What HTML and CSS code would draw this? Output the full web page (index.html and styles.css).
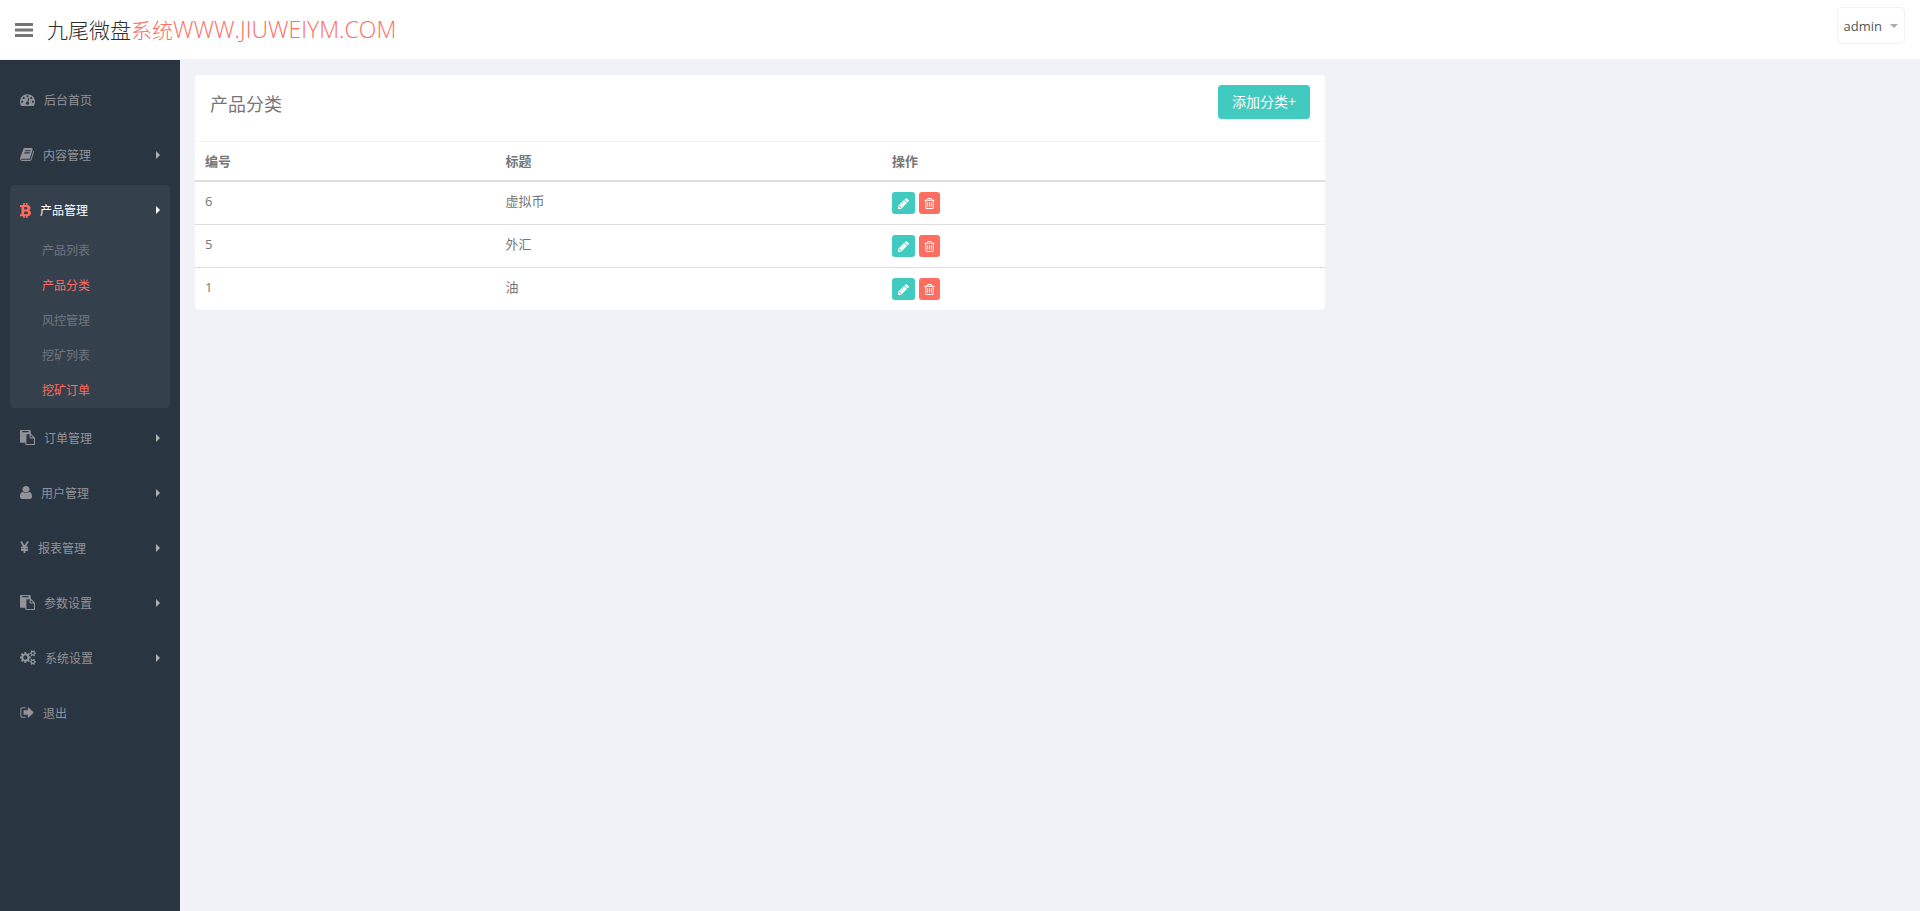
FILE: index.html
```html
<!DOCTYPE html>
<html lang="zh-CN">
<head>
<meta charset="utf-8">
<title>产品分类</title>
<link rel="stylesheet" href="styles.css">
</head>
<body>
<svg class="sprite" aria-hidden="true">
  <symbol id="i-dash" viewBox="0 0 1792 1792"><path d="M384 1152q0-53-37.5-90.5t-90.5-37.5-90.5 37.5-37.5 90.5 37.5 90.5 90.5 37.5 90.5-37.5 37.5-90.5zm192-448q0-53-37.5-90.5t-90.5-37.5-90.5 37.5-37.5 90.5 37.5 90.5 90.5 37.5 90.5-37.5 37.5-90.5zm428 481l101-382q6-26-7.5-48.5t-38.5-29.5-48 6.5-30 39.5l-101 382q-60 5-107 43.5t-63 98.5q-20 77 20 146t117 89 146-20 89-117q16-60-6-117t-72-91zm660-33q0-53-37.5-90.5t-90.5-37.5-90.5 37.5-37.5 90.5 37.5 90.5 90.5 37.5 90.5-37.5 37.5-90.5zm-640-640q0-53-37.5-90.5t-90.5-37.5-90.5 37.5-37.5 90.5 37.5 90.5 90.5 37.5 90.5-37.5 37.5-90.5zm448 192q0-53-37.5-90.5t-90.5-37.5-90.5 37.5-37.5 90.5 37.5 90.5 90.5 37.5 90.5-37.5 37.5-90.5zm320 448q0 261-141 483-19 29-54 29h-1402q-35 0-54-29-141-221-141-483 0-182 71-348t191-286 286-191 348-71 348 71 286 191 191 286 71 348z"/></symbol>
  <symbol id="i-book" viewBox="64 0 1664 1792"><path d="M1703 478q40 57 18 129l-275 906q-19 64-76.5 107.5t-122.5 43.5h-923q-77 0-148.5-53.5t-99.5-131.5q-24-67-2-127 0-4 3-27t4-37q1-8-3-21.5t-3-19.5q2-11 8-21t16.5-23.5 16.5-23.5q23-38 45-91.5t30-91.5q3-10 .5-30t-.5-28q3-11 17-28t17-23q21-36 42-92t25-90q1-9-2.5-32t.5-28q4-13 22-30.5t22-22.5q19-26 42.5-84.5t27.5-96.5q1-8-3-25.5t-2-26.5q2-8 9-18t18-23 17-21q8-12 16.5-30.5t15-35 16-36 19.5-32 26.5-23.5 36-11.5 47.5 5.5l-1 3q38-9 51-9h761q74 0 114 56t18 130l-274 906q-36 119-71.5 153.5t-128.5 34.5h-869q-27 0-38 15-11 16-1 43 24 70 144 70h923q29 0 56-15.5t35-41.5l300-987q7-22 5-57 38 15 59 43zm-1064 2q-4 13 2 22.5t20 9.5h608q13 0 25.5-9.5t16.5-22.5l21-64q4-13-2-22.5t-20-9.5h-608q-13 0-25.5 9.5t-16.5 22.5zm-83 256q-4 13 2 22.5t20 9.5h608q13 0 25.5-9.5t16.5-22.5l21-64q4-13-2-22.5t-20-9.5h-608q-13 0-25.5 9.5t-16.5 22.5z"/></symbol>
  <symbol id="i-btc" viewBox="0 0 11 15"><path fill-rule="evenodd" d="M0 2h6.500q4 0 4 2.900 0 1.700-1.500 2.300 2 .5 2 2.800 0 3.200-4.500 3.200H0v-1.900h1.500V3.900H0zM4.200 3.900v2.600h1.500q1.800 0 1.800-1.300T5.700 3.900zM4.200 8.400v2.900H6q2 0 2-1.500T6 8.400z"/><path d="M3.200 0h1.600v2.100H3.200zM6 0h1.600v2.300H6zM3.200 13h1.600v2H3.200zM6 13h1.600v2H6z"/></symbol>
  <symbol id="i-paste" viewBox="0 0 1792 1792"><path d="M768 1664h896v-640h-416q-40 0-68-28t-28-68v-416h-384v1152zm256-1440v-64q0-13-9.500-22.500t-22.500-9.500h-704q-13 0-22.500 9.500t-9.500 22.500v64q0 13 9.500 22.500t22.500 9.500h704q13 0 22.500-9.500t9.500-22.500zm256 672h299l-299-299v299zm512 128v672q0 40-28 68t-68 28h-960q-40 0-68-28t-28-68v-160h-544q-40 0-68-28t-28-68v-1344q0-40 28-68t68-28h1088q40 0 68 28t28 68v328q21 13 36 28l408 408q28 28 48 76t20 88z"/></symbol>
  <symbol id="i-user" viewBox="256 128 1280 1536" preserveAspectRatio="none"><path d="M1536 1399q0 109-62.500 187t-150.500 78h-854q-88 0-150.500-78t-62.500-187q0-85 8.500-160.500t31.500-152 58.500-131 94-89 134.500-34.500q131 128 313 128t313-128q76 0 134.500 34.500t94 89 58.500 131 31.500 152 8.500 160.500zm-256-887q0 159-112.500 271.500t-271.500 112.500-271.500-112.500-112.500-271.500 112.500-271.500 271.500-112.500 271.500 112.500 112.500 271.500z"/></symbol>
  <symbol id="i-yen" viewBox="0 0 9 15"><path d="M1 1.500l3.500 5.500L8 1.500M4.500 7v6M1 7.500h7M1 10h7" fill="none" stroke="currentColor" stroke-width="1.800"/></symbol>
  <symbol id="i-cogs" viewBox="-64 0 1920 1792"><path d="M832 896q0-106-75-181t-181-75-181 75-75 181 75 181 181 75 181-75 75-181zm768 512q0-52-38-90t-90-38-90 38-38 90q0 53 37.500 90.500t90.500 37.500 90.500-37.500 37.500-90.500zm0-1024q0-52-38-90t-90-38-90 38-38 90q0 53 37.500 90.500t90.500 37.500 90.500-37.500 37.500-90.500zm-384 421v185q0 10-7 19.500t-16 10.500l-155 24q-11 35-32 76 34 48 90 115 7 11 7 20 0 12-7 19-23 30-82.500 89.500t-78.500 59.500q-11 0-21-7l-115-90q-37 19-77 31-11 108-23 155-7 24-30 24h-186q-11 0-20-7.500t-10-17.500l-23-153q-34-10-75-31l-118 89q-7 7-20 7-11 0-21-8-144-133-144-160 0-9 7-19 10-14 41-53t47-61q-23-44-35-82l-152-24q-10-1-17-9.500t-7-19.500v-185q0-10 7-19.500t16-10.500l155-24q11-35 32-76-34-48-90-115-7-11-7-20 0-12 7-20 22-30 82-89t79-59q11 0 21 7l115 90q34-18 77-32 11-108 23-154 7-24 30-24h186q11 0 20 7.500t10 17.500l23 153q34 10 75 31l118-89q8-7 20-7 11 0 21 8 144 133 144 160 0 8-7 19-12 16-42 54t-45 60q23 48 34 82l152 23q10 2 17 10.500t7 19.500zm640 533v140q0 16-149 31-12 27-30 52 51 113 51 138 0 4-4 7-122 71-124 71-8 0-46-47t-52-68q-20 2-30 2t-30-2q-14 21-52 68t-46 47q-2 0-124-71-4-3-4-7 0-25 51-138-18-25-30-52-149-15-149-31v-140q0-16 149-31 13-29 30-52-51-113-51-138 0-4 4-7 4-2 35-20t59-34 30-16q8 0 46 46.500t52 67.500q20-2 30-2t30 2q51-71 92-112l6-2q4 0 124 70 4 3 4 7 0 25-51 138 17 23 30 52 149 15 149 31zm0-1024v140q0 16-149 31-12 27-30 52 51 113 51 138 0 4-4 7-122 71-124 71-8 0-46-47t-52-68q-20 2-30 2t-30-2q-14 21-52 68t-46 47q-2 0-124-71-4-3-4-7 0-25 51-138-18-25-30-52-149-15-149-31v-140q0-16 149-31 13-29 30-52-51-113-51-138 0-4 4-7 4-2 35-20t59-34 30-16q8 0 46 46.500t52 67.500q20-2 30-2t30 2q51-71 92-112l6-2q4 0 124 70 4 3 4 7 0 25-51 138 17 23 30 52 149 15 149 31z"/></symbol>
  <symbol id="i-out" viewBox="0 0 1600 1792"><path d="M640 1440q0 4 1 20t.5 26.500-3 23.500-10 19.500-20.500 6.500h-320q-119 0-203.500-84.500t-84.500-203.500v-704q0-119 84.500-203.500t203.500-84.500h320q13 0 22.500 9.500t9.500 22.500q0 4 1 20t.5 26.500-3 23.500-10 19.500-20.500 6.500h-320q-66 0-113 47t-47 113v704q0 66 47 113t113 47h312l11.500 1 11.500 3 8 5.500 7 9 2 13.500zm928-544q0 26-19 45l-544 544q-19 19-45 19t-45-19-19-45v-288h-448q-26 0-45-19t-19-45v-384q0-26 19-45t45-19h448v-288q0-26 19-45t45-19 45 19l544 544q19 19 19 45z"/></symbol>
  <symbol id="i-pencil" viewBox="128 128 1536 1536"><path d="M491 1536l91-91-235-235-91 91v107h128v128h107zm523-928q0-22-22-22-10 0-17 7l-542 542q-7 7-7 17 0 22 22 22 10 0 17-7l542-542q7-7 7-17zm-54-192l416 416-832 832h-416v-416zm683 96q0 53-37 90l-166 166-416-416 166-165q36-38 90-38 53 0 91 38l235 234q37 39 37 91z"/></symbol>
  <symbol id="i-trash" viewBox="192 128 1408 1536"><path d="M704 736v576q0 14-9 23t-23 9h-64q-14 0-23-9t-9-23v-576q0-14 9-23t23-9h64q14 0 23 9t9 23zm256 0v576q0 14-9 23t-23 9h-64q-14 0-23-9t-9-23v-576q0-14 9-23t23-9h64q14 0 23 9t9 23zm256 0v576q0 14-9 23t-23 9h-64q-14 0-23-9t-9-23v-576q0-14 9-23t23-9h64q14 0 23 9t9 23zm128 724v-948h-896v948q0 22 7 40.500t14.500 27 10.500 8.500h832q3 0 10.500-8.500t14.500-27 7-40.500zm-672-1076h448l-48-117q-7-9-17-11h-317q-10 2-17 11zm928 32v64q0 14-9 23t-23 9h-96v948q0 83-47 143.500t-113 60.500h-832q-66 0-113-58.500t-47-141.500v-952h-96q-14 0-23-9t-9-23v-64q0-14 9-23t23-9h309l70-167q15-37 54-63t79-26h320q40 0 79 26t54 63l70 167h309q14 0 23 9t9 23z"/></symbol>
</svg>

<header class="header">
  <button class="menu-toggle" type="button" aria-label="菜单"><svg viewBox="0 0 18 14"><path d="M0 1.500h18M0 7h18M0 12.500h18" stroke="currentColor" stroke-width="2.800"/></svg></button>
  <a class="logo" href="#">九尾微盘<span class="logo-accent">系统<span class="logo-domain">WWW.JIUWEIYM.COM</span></span></a>
  <button class="account" type="button">admin<span class="caret"></span></button>
</header>

<div class="layout">
  <nav class="sidebar">
    <ul class="menu">
      <li><a class="item" href="#"><svg class="icon w15"><use href="#i-dash"/></svg>后台首页</a></li>
      <li><a class="item parent" href="#"><svg class="icon w14"><use href="#i-book"/></svg>内容管理</a></li>
      <li class="open">
        <a class="item parent" href="#"><svg class="icon w11"><use href="#i-btc"/></svg>产品管理</a>
        <ul class="sub">
          <li><a href="#">产品列表</a></li>
          <li><a class="hot" href="#">产品分类</a></li>
          <li><a href="#">风控管理</a></li>
          <li><a href="#">挖矿列表</a></li>
          <li><a class="hot" href="#">挖矿订单</a></li>
        </ul>
      </li>
      <li><a class="item parent" href="#"><svg class="icon w15"><use href="#i-paste"/></svg>订单管理</a></li>
      <li><a class="item parent" href="#"><svg class="icon w12"><use href="#i-user"/></svg>用户管理</a></li>
      <li><a class="item parent" href="#"><svg class="icon w9"><use href="#i-yen"/></svg>报表管理</a></li>
      <li><a class="item parent" href="#"><svg class="icon w15"><use href="#i-paste"/></svg>参数设置</a></li>
      <li><a class="item parent" href="#"><svg class="icon w16"><use href="#i-cogs"/></svg>系统设置</a></li>
      <li><a class="item" href="#"><svg class="icon w14"><use href="#i-out"/></svg>退出</a></li>
    </ul>
  </nav>

  <main class="content">
    <section class="panel">
      <div class="panel-head">
        <h1 class="panel-title">产品分类</h1>
        <button class="add" type="button">添加分类+</button>
      </div>
      <table class="table">
        <thead><tr><th class="col-id">编号</th><th class="col-title">标题</th><th>操作</th></tr></thead>
        <tbody>
          <tr><td>6</td><td>虚拟币</td><td><div class="actions"><button class="btn edit" type="button" aria-label="编辑"><svg><use href="#i-pencil"/></svg></button><button class="btn del" type="button" aria-label="删除"><svg><use href="#i-trash"/></svg></button></div></td></tr>
          <tr><td>5</td><td>外汇</td><td><div class="actions"><button class="btn edit" type="button" aria-label="编辑"><svg><use href="#i-pencil"/></svg></button><button class="btn del" type="button" aria-label="删除"><svg><use href="#i-trash"/></svg></button></div></td></tr>
          <tr><td>1</td><td>油</td><td><div class="actions"><button class="btn edit" type="button" aria-label="编辑"><svg><use href="#i-pencil"/></svg></button><button class="btn del" type="button" aria-label="删除"><svg><use href="#i-trash"/></svg></button></div></td></tr>
        </tbody>
      </table>
    </section>
  </main>
</div>
</body>
</html>
```
FILE: styles.css
```css
* { box-sizing: border-box; }
body {
  margin: 0;
  min-height: 100vh;
  display: flex;
  flex-direction: column;
  background: #f1f2f7;
  color: #767676;
  font: 13px/18px "Open Sans", "Noto Sans CJK SC", sans-serif;
}
a { color: inherit; text-decoration: none; }
ul { list-style: none; margin: 0; padding: 0; }
button { font: inherit; margin: 0; cursor: pointer; }
svg { fill: currentColor; display: block; }
.sprite { display: none; }

.header {
  display: flex;
  align-items: center;
  height: 60px;
  padding: 0 15px;
  background: #fff;
  border-bottom: 1px solid #f1f2f7;
}
.menu-toggle { padding: 0; border: 0; background: none; color: #767676; }
.menu-toggle svg { width: 18px; height: 14px; }
.logo {
  margin-left: 14px;
  color: #2e2e2e;
  font-size: 21px;
  line-height: 30px;
  font-weight: 300;
}
.logo-accent { color: #ff6c60; }
.logo-domain { font-size: 23px; line-height: 1; }
.account {
  display: flex;
  align-items: center;
  gap: 8px;
  height: 37px;
  margin: 0 0 8px auto;
  padding: 0 6px;
  border: 1px solid #f1f2f7;
  border-radius: 4px;
  background: #fff;
  color: #555;
}
.caret {
  border: 4px solid transparent;
  border-top-color: #a4aabb;
  border-bottom: 0;
}

.layout { display: flex; flex: 1; }
.sidebar { width: 180px; flex: none; background: #2a3542; padding: 15px 10px; }
.menu { display: flex; flex-direction: column; gap: 5px; font-size: 12px; }
.item {
  display: flex;
  align-items: center;
  gap: 9px;
  height: 50px;
  padding: 2px 10px 0;
  color: #919398;
}
.parent::after {
  content: "";
  margin: 0 0 2px auto;
  border: 4px solid transparent;
  border-left-color: #b0b0b0;
  border-right: 0;
}
.icon { height: 15px; margin-bottom: 4px; }
.w9 { width: 9px; }
.w11 { width: 11px; }
.w12 { width: 12px; height: 13px; }
.w14 { width: 14px; }
.w15 { width: 15px; }
.w16 { width: 16px; }
.open { background: #35404d; border-radius: 4px; }
.open .item { height: 48px; padding-top: 4px; color: #fff; }
.open .icon { margin-bottom: 2px; color: #ff6c60; }
.open .parent::after { border-left-color: #fff; }
.sub a { display: block; padding-left: 32px; line-height: 35px; color: #6f767f; }
.sub .hot { color: #ff6c60; }

.content { flex: 1; padding: 15px; }
.panel {
  width: calc(100% * 2 / 3 - 10px);
  background: #fff;
  border-radius: 4px;
}
.panel-head {
  display: flex;
  justify-content: space-between;
  align-items: flex-start;
  padding: 10px 15px 18px;
  border-bottom: 1px solid #eff2f7;
}
.panel-title { margin: 0; font-size: 18px; line-height: 38px; font-weight: 400; }
.add {
  height: 34px;
  padding: 0 14px;
  border: 0;
  border-radius: 4px;
  background: #41cac0;
  color: #fff;
  font-size: 14px;
}
.table { width: 100%; border-collapse: separate; border-spacing: 0; table-layout: fixed; }
.table th { padding: 10px; text-align: left; border-bottom: 2px solid #ddd; font-weight: 700; }
.table td { padding: 10px; vertical-align: top; border-bottom: 1px solid #ddd; }
.table tbody tr:last-child td { border-bottom: 0; }
.col-id { width: 26.6%; }
.col-title { width: 34.2%; }
.actions { display: flex; gap: 4px; }
.btn {
  display: flex;
  align-items: center;
  justify-content: center;
  width: 23px;
  height: 22px;
  padding: 1px 0 0;
  border: 0;
  border-radius: 3px;
  color: #fff;
}
.btn svg { width: 11px; height: 11px; }
.edit { background: #41cac0; }
.del { width: 21px; background: #ff6c60; }
.del svg { width: 11px; }
```
